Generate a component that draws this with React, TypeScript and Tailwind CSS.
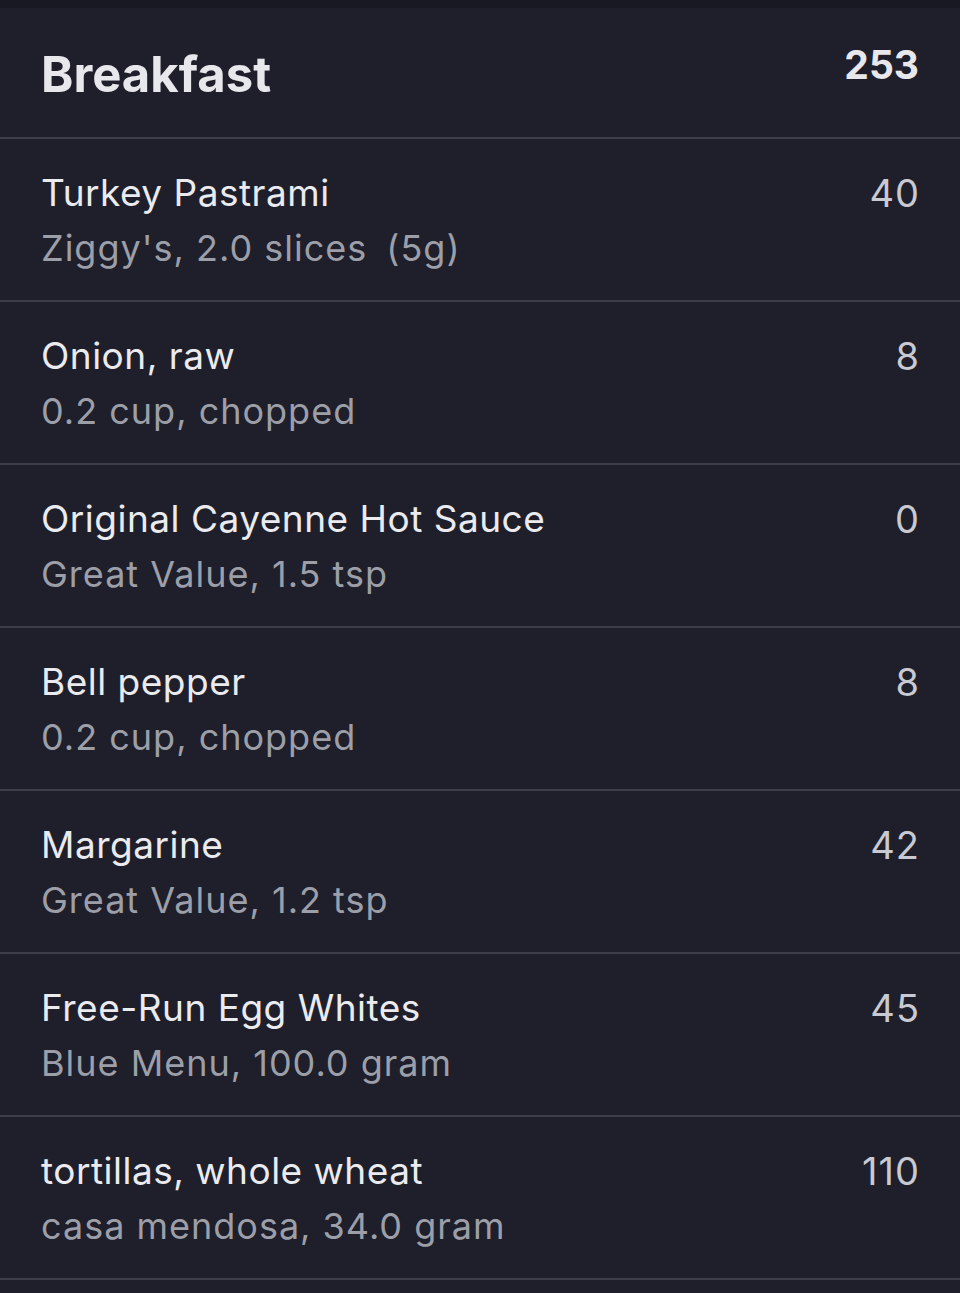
const items = [
  { name: 'Turkey Pastrami', detail: "Ziggy's, 2.0 slices\u2002(5g)", cal: 40 },
  { name: 'Onion, raw', detail: '0.2 cup, chopped', cal: 8 },
  { name: 'Original Cayenne Hot Sauce', detail: 'Great Value, 1.5 tsp', cal: 0 },
  { name: 'Bell pepper', detail: '0.2 cup, chopped', cal: 8 },
  { name: 'Margarine', detail: 'Great Value, 1.2 tsp', cal: 42 },
  { name: 'Free-Run Egg Whites', detail: 'Blue Menu, 100.0 gram', cal: 45 },
  { name: 'tortillas, whole wheat', detail: 'casa mendosa, 34.0 gram', cal: 110 },
]

export default function App() {
  return (
    <div
      className="min-h-[1293px] w-[960px] bg-[#1e1f2a] text-[#e9e9ed]"
      style={{ fontFamily: 'Inter, "Noto Sans", sans-serif' }}
    >
      <div className="h-[8px] bg-[#181923]" />

      {/* Meal header */}
      <div className="flex h-[131px] items-start justify-between border-b-2 border-[#3c3d48] pl-[41px] pr-[41px]">
        <h1 className="mt-[42px] text-[49px] font-bold leading-[49px] text-[#e8e8ec]">Breakfast</h1>
        <span className="mt-[37px] text-[39px] font-bold leading-[39px] text-[#e8e8ec]">253</span>
      </div>

      {items.map((item) => (
        <div
          key={item.name}
          className="flex h-[163px] items-start justify-between border-b-2 border-[#3c3d48] pl-[41px] pr-[40px] pt-[32px]"
        >
          <div className="flex flex-col gap-[11px]">
            <span className="text-[37px] leading-[44px] tracking-[0.5px] text-[#ebebef]">{item.name}</span>
            <span className="whitespace-pre text-[36px] leading-[44px] tracking-[1px] text-[#9c9ea8]">
              {item.detail}
            </span>
          </div>
          <span className="text-[38px] leading-[44px] tracking-[1px] text-[#c9cad1]">{item.cal}</span>
        </div>
      ))}
    </div>
  )
}
